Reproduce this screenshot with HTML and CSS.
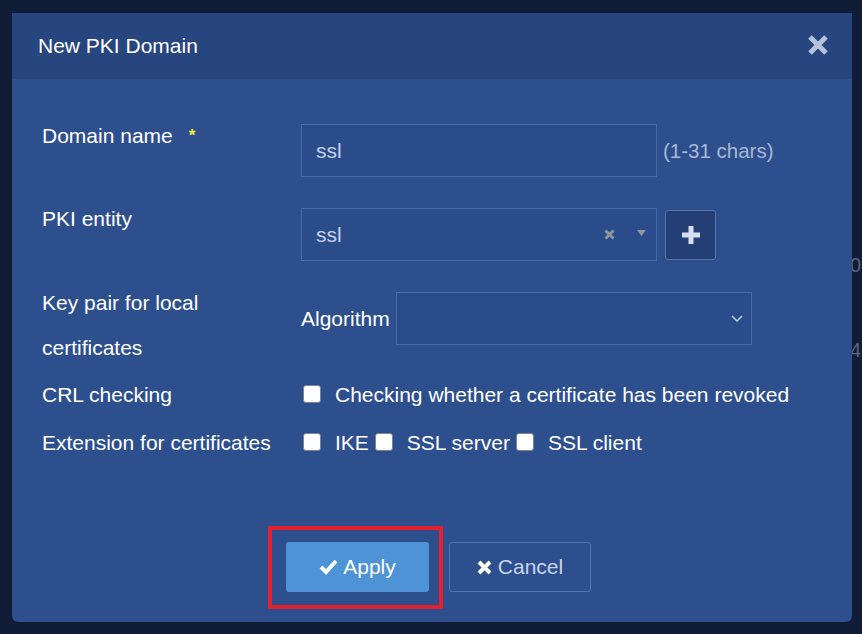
FILE: index.html
```html
<!DOCTYPE html>
<html>
<head>
<meta charset="utf-8">
<link rel="stylesheet" href="styles.css">
</head>
<body>
<div class="page-bg">
  <span class="bg-text bg-t1">0</span>
  <span class="bg-text bg-t2">42</span>
</div>
<div class="modal">
  <div class="modal-header">
    <div class="modal-title">New PKI Domain</div>
    <svg class="close" width="22" height="22" viewBox="0 0 22 22"><path d="M3 3 L19 19 M19 3 L3 19" stroke="#b6c2dc" stroke-width="5"/></svg>
  </div>
  <div class="modal-body">
    <div class="row r1">
      <div class="label">Domain name<span class="req">*</span></div>
      <div class="ctrl">
        <div class="field">ssl</div>
        <span class="hint">(1-31 chars)</span>
      </div>
    </div>
    <div class="row r2">
      <div class="label">PKI entity</div>
      <div class="ctrl">
        <div class="field select2">
          <span class="val">ssl</span>
          <svg class="clear" width="11" height="11" viewBox="0 0 11 11"><path d="M1.5 1.5 L9.5 9.5 M9.5 1.5 L1.5 9.5" stroke="#8f949f" stroke-width="3"/></svg>
          <svg class="caret" width="9" height="6" viewBox="0 0 9 6"><polygon points="0,0 9,0 4.5,6" fill="#8f949f"/></svg>
        </div>
        <div class="add-btn"><svg width="18" height="18" viewBox="0 0 18 18"><rect x="0" y="6.5" width="18" height="5" fill="#d6dff0"/><rect x="6.5" y="0" width="5" height="18" fill="#d6dff0"/></svg></div>
      </div>
    </div>
    <div class="row r3">
      <div class="label">Key pair for local<br>certificates</div>
      <div class="ctrl">
        <span class="sub-label">Algorithm</span>
        <div class="field algo">
          <svg class="chev" width="12" height="7" viewBox="0 0 12 7"><polyline points="1,1 6,6 11,1" fill="none" stroke="#c4cfe6" stroke-width="1.5"/></svg>
        </div>
      </div>
    </div>
    <div class="row r4">
      <div class="label">CRL checking</div>
      <div class="ctrl checks">
        <span class="check-item"><span class="box"></span><span>Checking whether a certificate has been revoked</span></span>
      </div>
    </div>
    <div class="row r5">
      <div class="label">Extension for certificates</div>
      <div class="ctrl checks">
        <span class="check-item"><span class="box"></span><span>IKE</span></span>
        <span class="check-item"><span class="box"></span><span>SSL server</span></span>
        <span class="check-item"><span class="box"></span><span>SSL client</span></span>
      </div>
    </div>
  </div>
  <div class="modal-footer">
    <div class="btn btn-apply"><svg width="19" height="16" viewBox="0 0 19 16"><polyline points="2,8 7,13 17,2" fill="none" stroke="#ffffff" stroke-width="4"/></svg><span>Apply</span></div>
    <div class="btn btn-cancel"><svg width="15" height="15" viewBox="0 0 15 15"><path d="M2 2 L13 13 M13 2 L2 13" stroke="#ffffff" stroke-width="4"/></svg><span>Cancel</span></div>
  </div>
</div>
<div class="highlight"></div>
</body>
</html>
```
FILE: styles.css
```css
html, body {
  margin: 0;
  padding: 0;
}
body {
  width: 862px;
  height: 634px;
  background: #111c36;
  font-family: "Liberation Sans", Arial, sans-serif;
  position: relative;
  overflow: hidden;
}
.page-bg {
  position: absolute;
  left: 0;
  top: 0;
  width: 862px;
  height: 634px;
}
.bg-text {
  position: absolute;
  left: 850px;
  font-size: 20px;
  color: #5a6580;
}
.bg-t1 { top: 254px; }
.bg-t2 { top: 339px; }

.modal {
  position: absolute;
  left: 12px;
  top: 13px;
  width: 840px;
  height: 609px;
  background: #2d4f8e;
  border-radius: 0 0 6px 6px;
  display: flex;
  flex-direction: column;
}
.modal-header {
  height: 66px;
  background: #27457e;
  display: flex;
  align-items: center;
  justify-content: space-between;
  padding: 0 23px 0 26px;
}
.modal-title {
  color: #ffffff;
  font-size: 21px;
}
.close {
  display: block;
  margin-top: -3px;
}
.modal-body {
  padding: 34px 0 0 30px;
  color: #ffffff;
  font-size: 21px;
}
.row {
  display: flex;
  align-items: flex-start;
}
.label {
  width: 259px;
  line-height: 45px;
  flex-shrink: 0;
}
.req {
  color: #f2ea3b;
  font-size: 17px;
  font-weight: bold;
  margin-left: 16px;
  vertical-align: 2px;
}
.ctrl {
  display: flex;
  align-items: center;
}
.r1 .ctrl { margin-top: 11px; }
.r2 .ctrl, .r3 .ctrl { margin-top: 12px; }
.r1 { margin-bottom: 19px; }
.r2 { margin-bottom: 19px; }
.r3 { margin-bottom: 2px; }
.r4 { margin-bottom: 3px; }
.field {
  box-sizing: border-box;
  width: 356px;
  height: 53px;
  border: 1px solid #4b6aa4;
  background: #2b4c8a;
  color: #c6d2ea;
  padding: 0 10px 0 14px;
  display: flex;
  align-items: center;
}
.hint {
  color: #a9b7d4;
  font-size: 20.5px;
  margin-left: 6px;
}
.select2 .val { flex: 1; }
.clear { margin-right: 22px; display: block; }
.caret { margin-top: -4px; display: block; }
.add-btn {
  box-sizing: border-box;
  width: 51px;
  height: 50px;
  margin-left: 8px;
  background: #243f76;
  border: 1px solid #5673ab;
  border-radius: 3px;
  display: flex;
  align-items: center;
  justify-content: center;
}
.add-btn svg { display: block; }
.sub-label {
  width: 95px;
}
.algo {
  justify-content: flex-end;
  padding-right: 8px;
}
.chev { display: block; }
.checks {
  height: 45px;
  margin-left: 2px;
  gap: 6px;
}
.check-item {
  display: inline-flex;
  align-items: center;
}
.box {
  box-sizing: border-box;
  width: 18px;
  height: 18px;
  background: #ffffff;
  border: 1px solid #7d8595;
  border-radius: 3px;
  margin-right: 14px;
  margin-top: -1px;
}
.modal-footer {
  margin-top: auto;
  padding: 0 0 30px 274px;
  display: flex;
  gap: 20px;
}
.btn {
  box-sizing: border-box;
  height: 50px;
  border-radius: 3px;
  display: flex;
  align-items: center;
  justify-content: center;
  font-size: 21px;
  gap: 5px;
}
.btn svg { display: block; }
.btn-apply {
  width: 143px;
  background: #4d93d5;
  color: #ffffff;
}
.btn-cancel {
  width: 142px;
  border: 1px solid #5673ab;
  color: #c9d4ea;
  gap: 6px;
}
.highlight {
  position: absolute;
  left: 268px;
  top: 526px;
  width: 175px;
  height: 83px;
  box-sizing: border-box;
  border: 4px solid #e3202c;
}
```
